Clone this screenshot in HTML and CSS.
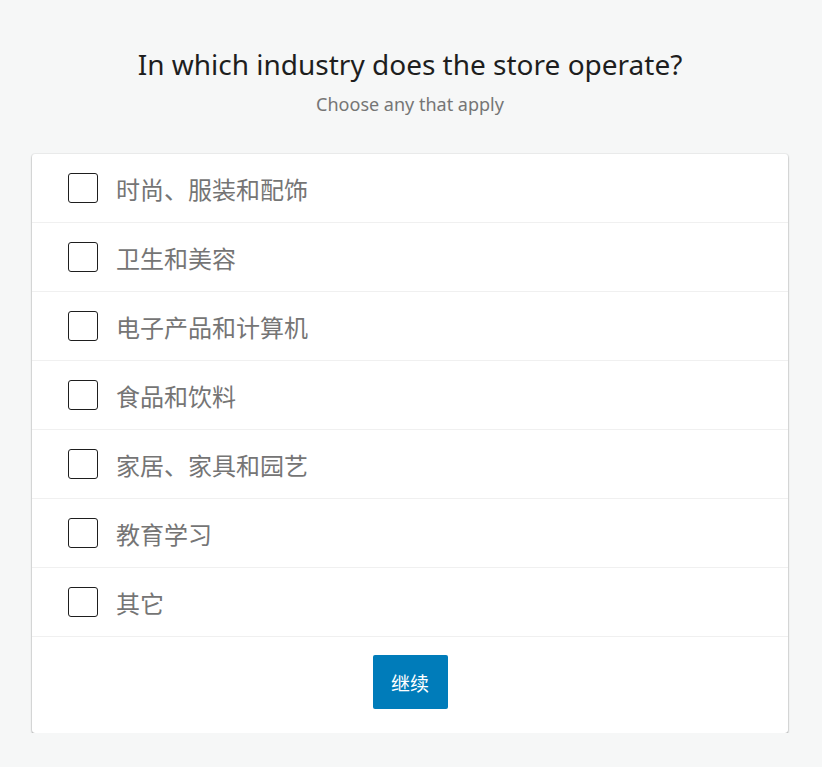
FILE: index.html
```html
<!DOCTYPE html>
<html lang="zh">
<head>
	<meta charset="UTF-8">
	<title>Store industry</title>
	<link rel="stylesheet" href="styles.css">
</head>
<body>
	<div class="page">
		<!-- Header -->
		<div class="header">
			<h1 class="title">In which industry does the store operate?</h1>
			<p class="subtitle">Choose any that apply</p>
		</div>

		<!-- Options -->
		<div class="card">
			<ul class="optionList">
				<li><label><input type="checkbox"><span class="box"></span>时尚、服装和配饰</label></li>
				<li><label><input type="checkbox"><span class="box"></span>卫生和美容</label></li>
				<li><label><input type="checkbox"><span class="box"></span>电子产品和计算机</label></li>
				<li><label><input type="checkbox"><span class="box"></span>食品和饮料</label></li>
				<li><label><input type="checkbox"><span class="box"></span>家居、家具和园艺</label></li>
				<li><label><input type="checkbox"><span class="box"></span>教育学习</label></li>
				<li><label><input type="checkbox"><span class="box"></span>其它</label></li>
			</ul>
			<div class="footer">
				<button class="continue">继续</button>
			</div>
		</div>
	</div>
</body>
</html>
```

FILE: styles.css
```css
body {
	margin: 0;
	background: #f6f7f7;
	font-family: "Noto Sans", "Noto Sans CJK SC", sans-serif;
	color: #1e1e1e;
}

.page {
	padding: 40px 34px 0 32px;
}

.header {
	text-align: center;
}
.title {
	margin: 0;
	font-size: 28px;
	font-weight: 400;
	line-height: 48px;
}
.subtitle {
	margin: 0;
	font-size: 18px;
	color: #757575;
	line-height: 32px;
}

.card {
	margin-top: 34px;
	background: #fff;
	border-radius: 3px;
	box-shadow: 0 1px 2px rgba(0, 0, 0, 0.4), 0 0 0 1px rgba(0, 0, 0, 0.03);
}

.optionList {
	list-style: none;
	margin: 0;
	padding: 0;
}
.optionList li {
	border-bottom: solid 1px #f0f0f0;
}
.optionList label {
	display: flex;
	align-items: center;
	height: 68px;
	padding: 0 36px;
	font-size: 24px;
	color: #757575;
	cursor: pointer;
}
.optionList input[type="checkbox"] {
	display: none;
}
.box {
	width: 28px;
	height: 28px;
	border: solid 1px #1e1e1e;
	border-radius: 3px;
	margin-right: 18px;
}
.optionList input[type="checkbox"]:checked + .box {
	background: #007cba;
	border-color: #007cba;
}

.footer {
	display: flex;
	justify-content: center;
	padding: 18px 0 24px 0;
}
.continue {
	width: 75px;
	height: 54px;
	background: #007cba;
	color: #fff;
	border: none;
	border-radius: 2px;
	font-family: "Noto Sans CJK SC", sans-serif;
	font-size: 19px;
}
```
